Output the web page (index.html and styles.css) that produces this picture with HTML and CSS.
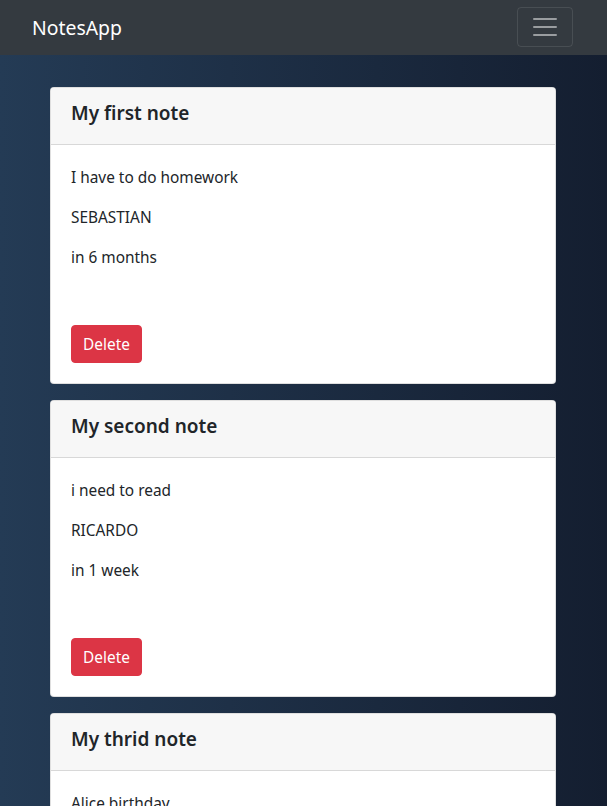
FILE: index.html
```html
<!DOCTYPE html>
<html lang="en">
<head>
<meta charset="utf-8">
<title>NotesApp</title>
<link rel="stylesheet" href="styles.css">
</head>
<body>
<nav class="navbar">
  <a class="brand" href="#">NotesApp</a>
  <button class="toggler" type="button" aria-label="Toggle navigation">
    <svg width="30" height="30" viewBox="0 0 30 30"><path stroke="rgba(255,255,255,0.5)" stroke-linecap="round" stroke-miterlimit="10" stroke-width="2" d="M4 7h22M4 15h22M4 23h22"/></svg>
  </button>
</nav>
<main class="content">
  <div class="card">
    <div class="card-header"><h5>My first note</h5></div>
    <div class="card-body">
      <p>I have to do homework</p>
      <p>SEBASTIAN</p>
      <p>in 6 months</p>
      <p class="spacer"></p>
      <button class="btn-danger">Delete</button>
    </div>
  </div>
  <div class="card">
    <div class="card-header"><h5>My second note</h5></div>
    <div class="card-body">
      <p>i need to read</p>
      <p>RICARDO</p>
      <p>in 1 week</p>
      <p class="spacer"></p>
      <button class="btn-danger">Delete</button>
    </div>
  </div>
  <div class="card">
    <div class="card-header"><h5>My thrid note</h5></div>
    <div class="card-body">
      <p>Alice birthday</p>
      <p>ALICE</p>
      <p>in 2 days</p>
      <p class="spacer"></p>
      <button class="btn-danger">Delete</button>
    </div>
  </div>
</main>
</body>
</html>
```
FILE: styles.css
```css
html, body {
  margin: 0;
  padding: 0;
}
body {
  font-family: "Noto Sans", "Open Sans", sans-serif;
  font-size: 15.4px;
  line-height: 24px;
  color: #212529;
  background: linear-gradient(to right, #243b55, #141e30);
  min-height: 100vh;
}
.navbar {
  display: flex;
  align-items: center;
  justify-content: space-between;
  background: #343a40;
  padding: 7px 34px 8px 32px;
  height: 40px;
}
.brand {
  color: #fff;
  text-decoration: none;
  font-size: 19.4px;
  line-height: 30px;
  padding-top: 2px;
}
.toggler {
  display: flex;
  align-items: center;
  justify-content: center;
  width: 56px;
  height: 40px;
  padding: 0;
  background: transparent;
  border: 1px solid rgba(255, 255, 255, 0.1);
  border-radius: 4px;
}
.content {
  display: flex;
  flex-direction: column;
  gap: 16px;
  padding: 32px 51px 16px 50px;
}
.card {
  background: #fff;
  border: 1px solid rgba(0, 0, 0, 0.125);
  border-radius: 4px;
  overflow: hidden;
}
.card-header {
  background: #f7f7f7;
  border-bottom: 1px solid rgba(0, 0, 0, 0.125);
  padding: 12px 20px;
}
.card-header h5 {
  box-sizing: border-box;
  height: 24px;
  padding-top: 1px;
  margin: 0 0 8px;
  font-size: 19px;
  font-weight: 600;
  line-height: 24px;
}
.card-body {
  padding: 20px;
}
.card-body p {
  box-sizing: border-box;
  margin: 0 0 16px;
  height: 24px;
  padding-top: 1px;
}
.btn-danger {
  font-family: inherit;
  font-size: 15.4px;
  line-height: 24px;
  height: 38px;
  width: 71px;
  padding: 2px 0 0;
  color: #fff;
  background: #dc3545;
  border: 1px solid #dc3545;
  border-radius: 4px;
}
```
